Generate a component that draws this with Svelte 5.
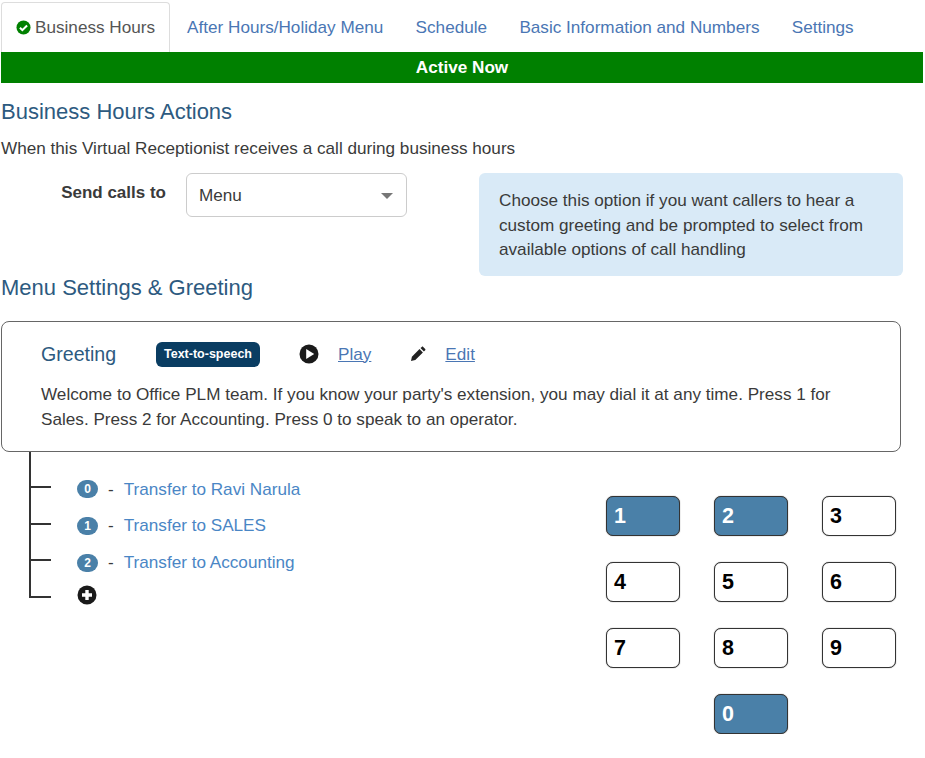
<script lang="ts">
	const tabs = ['After Hours/Holiday Menu', 'Schedule', 'Basic Information and Numbers', 'Settings'];

	const options = [
		{ key: '0', label: 'Transfer to Ravi Narula' },
		{ key: '1', label: 'Transfer to SALES' },
		{ key: '2', label: 'Transfer to Accounting' }
	];

	const keys = ['1', '2', '3', '4', '5', '6', '7', '8', '9', '', '0'];
	const assigned = options.map((o) => o.key);
</script>

<div class="page">
	<nav class="tabs">
		<a href="#hours" class="tab active">
			<svg class="check" viewBox="0 0 16 16" width="15" height="15" aria-hidden="true">
				<circle cx="8" cy="8" r="7.5" fill="#008000" />
				<path d="M4.2 8.2l2.6 2.6 5-5" fill="none" stroke="#fff" stroke-width="2.2" />
			</svg>
			Business Hours
		</a>
		{#each tabs as tab}
			<a href="#tab" class="tab">{tab}</a>
		{/each}
	</nav>

	<div class="status">Active Now</div>

	<h2 class="first">Business Hours Actions</h2>
	<p class="intro">When this Virtual Receptionist receives a call during business hours</p>

	<div class="send">
		<span class="send-label">Send calls to</span>
		<div class="select">
			<span>Menu</span>
			<span class="caret"></span>
		</div>
		<div class="hint">
			Choose this option if you want callers to hear a custom greeting and be prompted to select from available options of call handling
		</div>
	</div>

	<h2>Menu Settings &amp; Greeting</h2>

	<section class="greeting">
		<div class="greeting-head">
			<span class="greeting-title">Greeting</span>
			<span class="tts">Text-to-speech</span>
			<svg class="play" viewBox="0 0 20 20" width="20" height="20" aria-hidden="true">
				<circle cx="10" cy="10" r="9.5" fill="#1a1a1a" />
				<path d="M7.2 5l8 5-8 5z" fill="#fff" />
			</svg>
			<a href="#play" class="action play-link">Play</a>
			<svg class="pencil" viewBox="0 0 16 16" width="16" height="16" aria-hidden="true">
				<path d="M1 15l.9-4.3 7.6-7.6 3.4 3.4-7.6 7.6zM10.5 2.1l1.3-1.2c.4-.4 1-.4 1.4 0l2 2c.4.4.4 1 0 1.4l-1.3 1.3z" fill="#222" />
			</svg>
			<a href="#edit" class="action">Edit</a>
		</div>
		<p class="greeting-text">
			Welcome to Office PLM team. If you know your party's extension, you may dial it at any time. Press 1 for Sales. Press 2 for Accounting. Press 0 to speak to an operator.
		</p>
	</section>

	<div class="lower">
		<div class="tree">
			{#each options as option}
				<div class="branch">
					<span class="badge">{option.key}</span>
					<span class="dash">-</span>
					<a href="#option" class="transfer">{option.label}</a>
				</div>
			{/each}
			<div class="branch add">
				<svg viewBox="0 0 20 20" width="20" height="20" aria-hidden="true">
					<circle cx="10" cy="10" r="9.5" fill="#1a1a1a" />
					<path d="M10 5v10M5 10h10" stroke="#fff" stroke-width="3.4" />
				</svg>
			</div>
		</div>

		<div class="keypad">
			{#each keys as key}
				{#if key}
					<button class="key" class:on={assigned.includes(key)}>{key}</button>
				{:else}
					<span></span>
				{/if}
			{/each}
		</div>
	</div>
</div>

<style>
	:global(body) {
		background: #fff;
		font-family: 'Liberation Sans', Arial, sans-serif;
	}

	.page {
		width: 922px;
		padding: 2px 0 0 1px;
		box-sizing: content-box;
		font-size: 17.15px;
		color: #3a3a3a;
	}

	.tabs {
		display: flex;
		height: 50px;
	}

	.tab {
		display: flex;
		align-items: center;
		gap: 4px;
		padding: 0 15.3px 0 17px;
		color: #4a76b4;
		text-decoration: none;
		white-space: nowrap;
	}

	.tab.active {
		padding: 0 14px;
		color: #555;
		border: 1px solid #ddd;
		border-bottom: 0;
		border-radius: 4px 4px 0 0;
	}

	.check {
		flex: none;
	}

	.status {
		height: 31px;
		line-height: 31px;
		background: #008000;
		color: #fff;
		font-weight: 700;
		text-align: center;
	}

	h2 {
		margin: 0;
		font-size: 22px;
		font-weight: 400;
		line-height: 24px;
		color: #2d5a80;
	}

	.first {
		margin-top: 17px;
	}

	.intro {
		margin: 14px 0 0;
		line-height: 20px;
	}

	.send {
		display: flex;
		align-items: flex-start;
		margin-top: 15px;
	}

	.send-label {
		width: 165px;
		padding-top: 10px;
		text-align: right;
		font-size: 17px;
		font-weight: 700;
		line-height: 20px;
	}

	.select {
		display: flex;
		align-items: center;
		justify-content: space-between;
		box-sizing: border-box;
		width: 221px;
		height: 44px;
		margin-left: 20px;
		padding: 1px 13px 0 12px;
		border: 1px solid #ccc;
		border-radius: 6px;
	}

	.caret {
		width: 0;
		height: 0;
		border-left: 6px solid transparent;
		border-right: 6px solid transparent;
		border-top: 6px solid #777;
	}

	.hint {
		box-sizing: border-box;
		width: 424px;
		height: 103px;
		margin-left: 72px;
		padding: 15px 20px;
		background: #d9eaf7;
		border-radius: 6px;
		line-height: 24.5px;
	}

	.greeting {
		box-sizing: border-box;
		width: 900px;
		height: 131px;
		margin-top: 21px;
		padding: 19px 39px 0;
		border: 1px solid #666;
		border-radius: 8px;
	}

	.greeting-head {
		display: flex;
		align-items: center;
		height: 26px;
	}

	.greeting-title {
		width: 115px;
		font-size: 19.6px;
		color: #2d5a80;
	}

	.tts {
		box-sizing: border-box;
		width: 104px;
		height: 25px;
		line-height: 25px;
		text-align: center;
		background: #0a3d62;
		border-radius: 6px;
		color: #fff;
		font-size: 12.5px;
		font-weight: 700;
	}

	.play {
		margin-left: 39px;
	}

	.action {
		color: #4a76b4;
	}

	.play-link {
		margin: 0 39px 0 19px;
	}

	.pencil {
		margin-right: 19px;
	}

	.greeting-text {
		margin: 15px 0 0;
		line-height: 25px;
	}

	.lower {
		display: flex;
		justify-content: space-between;
		width: 895px;
	}

	.tree {
		box-sizing: border-box;
		align-self: flex-start;
		width: 400px;
		height: 146px;
		margin-left: 28px;
		padding-top: 18px;
		border-left: 2px solid #333;
	}

	.branch {
		position: relative;
		box-sizing: border-box;
		display: flex;
		align-items: center;
		height: 36.67px;
		padding: 2px 0 0 46px;
		white-space: nowrap;
	}

	.branch::before {
		content: '';
		position: absolute;
		left: 0;
		top: 16px;
		width: 20px;
		height: 2px;
		background: #333;
	}

	.add {
		align-items: flex-start;
		padding-top: 5px;
	}

	.badge {
		width: 21px;
		height: 18px;
		line-height: 18px;
		border-radius: 9px;
		background: #4a80a8;
		color: #fff;
		font-size: 12px;
		font-weight: 700;
		text-align: center;
	}

	.dash {
		margin: 0 10px;
	}

	.transfer {
		color: #4a86c5;
		text-decoration: none;
	}

	.keypad {
		display: grid;
		grid-template-columns: repeat(3, 74px);
		grid-auto-rows: 40px;
		gap: 26px 34px;
		margin-top: 44px;
	}

	.key {
		box-sizing: border-box;
		padding: 0 0 0 7px;
		text-align: left;
		background: #fff;
		border: 1px solid #333;
		box-shadow: 0 0 1px #555;
		border-radius: 7px;
		color: #000;
		font: 700 21.5px 'Liberation Sans', Arial, sans-serif;
	}

	.key.on {
		background: #4a80a8;
		color: #fff;
	}
</style>
